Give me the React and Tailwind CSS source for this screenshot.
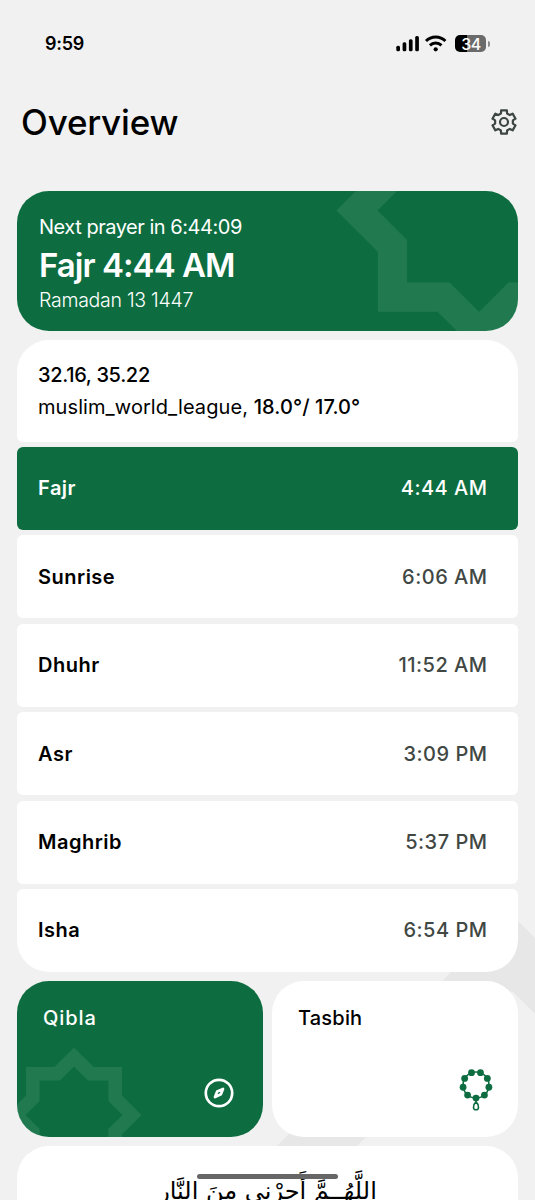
const prayers = [
  { name: "Fajr", time: "4:44 AM", active: true },
  { name: "Sunrise", time: "6:06 AM" },
  { name: "Dhuhr", time: "11:52 AM" },
  { name: "Asr", time: "3:09 PM" },
  { name: "Maghrib", time: "5:37 PM" },
  { name: "Isha", time: "6:54 PM" },
];

// eight pointed star: a square and a diamond laid over each other
function starPath(cx, cy, r) {
  const a = r * 0.71;
  const b = r - a;
  const pts = [
    [0, -r], [b, -a], [a, -a], [a, -b],
    [r, 0], [a, b], [a, a], [b, a],
    [0, r], [-b, a], [-a, a], [-a, b],
    [-r, 0], [-a, -b], [-a, -a], [-b, -a],
  ];
  return "M" + pts.map(([x, y]) => `${cx + x} ${cy + y}`).join("L") + "Z";
}

function StarRing({ cx, cy, outer, inner }) {
  return (
    <svg className="absolute inset-0 w-full h-full text-white/[0.085]">
      <path
        fill="currentColor"
        fillRule="evenodd"
        d={starPath(cx, cy, outer) + starPath(cx, cy, inner)}
      />
    </svg>
  );
}

function StatusIcons() {
  return (
    <div className="flex items-center">
      <svg width="24" height="17" viewBox="0 0 24 17">
        <rect x="0.3" y="10.7" width="3.7" height="5.6" rx="1.5" />
        <rect x="6.6" y="7.3" width="3.7" height="9" rx="1.5" />
        <rect x="12.9" y="4.2" width="3.7" height="12.1" rx="1.5" />
        <rect x="19.2" y="1" width="3.7" height="15.3" rx="1.5" />
      </svg>
      <svg className="ml-1" width="24" height="17" viewBox="0 0 24 17" fill="none" stroke="black" strokeWidth="2.9">
        <path d="M2 6.1a13.5 13.5 0 0 1 19.4 0" />
        <path d="M5.9 10.4a8.3 8.3 0 0 1 11.6 0" />
        <circle cx="11.7" cy="14.3" r="2.1" fill="black" stroke="none" />
      </svg>
      <div className="ml-[7px] w-[31px] h-[17.5px] rounded-[5px] bg-linear-to-r from-black from-38% to-[#6b6b6b] to-38% text-white text-[16px] leading-[18px] tracking-[-0.6px] font-medium text-center">
        34
      </div>
      <div className="ml-[1.5px] w-[1.6px] h-1.5 rounded-r bg-[#8a8a8a]" />
    </div>
  );
}

function GearIcon() {
  const points = [];
  for (let i = 0; i < 6; i++) {
    [[9, -20], [12, -14], [12, 14], [9, 20]].forEach(([r, deg]) => {
      const t = ((i * 60 + deg) * Math.PI) / 180;
      points.push(`${14 + r * Math.sin(t)},${14 - r * Math.cos(t)}`);
    });
  }
  return (
    <svg width="28" height="28" viewBox="0 0 28 28" fill="none" stroke="#3d4643" strokeWidth="2.2" strokeLinejoin="round">
      <polygon points={points.join(" ")} />
      <circle cx="14" cy="14" r="4" />
    </svg>
  );
}

function CompassIcon() {
  return (
    <svg width="30" height="30" viewBox="0 0 30 30" fill="none" stroke="white" strokeLinejoin="round">
      <circle cx="15" cy="15" r="13.2" strokeWidth="2.7" />
      <path d="M19 11l-2.1 5.3-5.9 2.7 2.2-5.5z" strokeWidth="2.7" />
    </svg>
  );
}

function BeadsIcon() {
  const beads = Array.from({ length: 9 }, (_, i) => {
    const angle = Math.PI / 2 + (i * 2 * Math.PI) / 9;
    return [17 + 13.1 * Math.cos(angle), 17 + 13.1 * Math.sin(angle)];
  });
  return (
    <svg width="34" height="43" viewBox="0 0 34 43" fill="#0d6d40">
      <circle cx="17" cy="17" r="13" fill="none" stroke="#0d6d40" strokeWidth="1.6" />
      {beads.map(([x, y], i) => (
        <circle key={i} cx={x} cy={y} r="3.4" />
      ))}
      <path d="M17 32v2c-1.8 1.4-2.5 3.5-2.5 5.4q0 2.3 2.5 2.3t2.5-2.3c0-1.9-.7-4-2.5-5.4" fill="none" stroke="#0d6d40" strokeWidth="1.6" />
    </svg>
  );
}

export default function App() {
  return (
    <div className="relative h-[1200px] w-[535px] overflow-hidden bg-[#f1f1f1] font-['Inter',sans-serif] text-black">
      <svg className="absolute inset-0 w-full h-full">
        <path d="M510 913L600 1003V1078L512 991L302 1201H222Z" fill="#e7e7e7" />
      </svg>

      <div className="relative flex h-full flex-col px-[17px]">
        {/* status bar */}
        <div className="flex h-[87px] shrink-0 items-center justify-between pl-[28px] pr-[28.5px]">
          <span className="text-[18px] font-semibold tracking-[-0.3px]">9:59</span>
          <StatusIcons />
        </div>

        {/* title */}
        <header className="flex h-[70px] shrink-0 items-center justify-between pl-[4px]">
          <h1 className="text-[35px] font-medium leading-[50px] tracking-[-0.2px]">Overview</h1>
          <GearIcon />
        </header>

        {/* next prayer */}
        <section className="relative mt-[34px] h-[140px] shrink-0 overflow-hidden rounded-[32px] bg-[#0d6d40] pl-[22px] pt-[22px] text-white">
          <StarRing cx={462} cy={19.5} outer={142.5} inner={101.5} />
          <div className="relative">
            <p className="text-[20px] leading-7 tracking-[-0.47px]">Next prayer in 6:44:09</p>
            <p className="text-[33px] font-semibold leading-[48px] tracking-[-0.95px]">Fajr 4:44 AM</p>
            <p className="text-[19.5px] font-light leading-[22px] tracking-[-0.27px]">Ramadan 13 1447</p>
          </div>
        </section>

        {/* location and times */}
        <section className="mt-[9px] flex shrink-0 flex-col gap-[5.4px]">
          <div className="h-[101.6px] rounded-t-[32px] rounded-b-[6px] bg-white pl-[21px] pt-[19px] text-[20px] leading-8">
            <p className="font-medium tracking-[-0.32px]">32.16, 35.22</p>
            <p className="tracking-[0.08px]">
              muslim_world_league, <span className="font-medium">18.0°/ 17.0°</span>
            </p>
          </div>
          {prayers.map((p) => (
            <div
              key={p.name}
              className={`flex h-[83px] items-center justify-between rounded-[6px] pl-[21px] pr-[30.5px] text-[20px] font-medium tracking-[0.5px] last:rounded-b-[32px] ${
                p.active ? "bg-[#0d6d40] text-white" : "bg-white"
              }`}
            >
              <span className="font-semibold">{p.name}</span>
              <span className={p.active ? "" : "text-[#414844]"}>{p.time}</span>
            </div>
          ))}
        </section>

        {/* tools */}
        <section className="mt-[9px] grid shrink-0 grid-cols-2 gap-[9px]">
          <div className="relative h-[156px] overflow-hidden rounded-[32px] bg-[#0d6d40] text-white">
            <StarRing cx={57} cy={134} outer={67.5} inner={48.5} />
            <div className="relative flex h-full flex-col items-end justify-between pb-[28.7px] pl-[26px] pr-[28.7px] pt-[23px]">
              <span className="self-start text-[20px] font-medium leading-7 tracking-[0.9px]">Qibla</span>
              <CompassIcon />
            </div>
          </div>
          <div className="flex h-[156px] flex-col items-end justify-between rounded-[32px] bg-white pb-[26px] pl-[26px] pr-[25.5px] pt-[23px]">
            <span className="self-start text-[20px] font-medium leading-7 tracking-[0.2px]">Tasbih</span>
            <BeadsIcon />
          </div>
        </section>

        {/* dua */}
        <section className="mt-[9px] h-[120px] shrink-0 rounded-[32px] bg-white pt-[25px] text-center">
          <p dir="rtl" className="font-['DejaVu_Sans','Noto_Sans',sans-serif] text-[24px] leading-[40px]">
            اللَّهُــمَّ أَجِرْنِي مِنَ النَّارِ
          </p>
        </section>
      </div>

      <div className="absolute left-[197px] top-[1174px] h-[5px] w-[141px] rounded-full bg-[#666]" />
    </div>
  );
}
